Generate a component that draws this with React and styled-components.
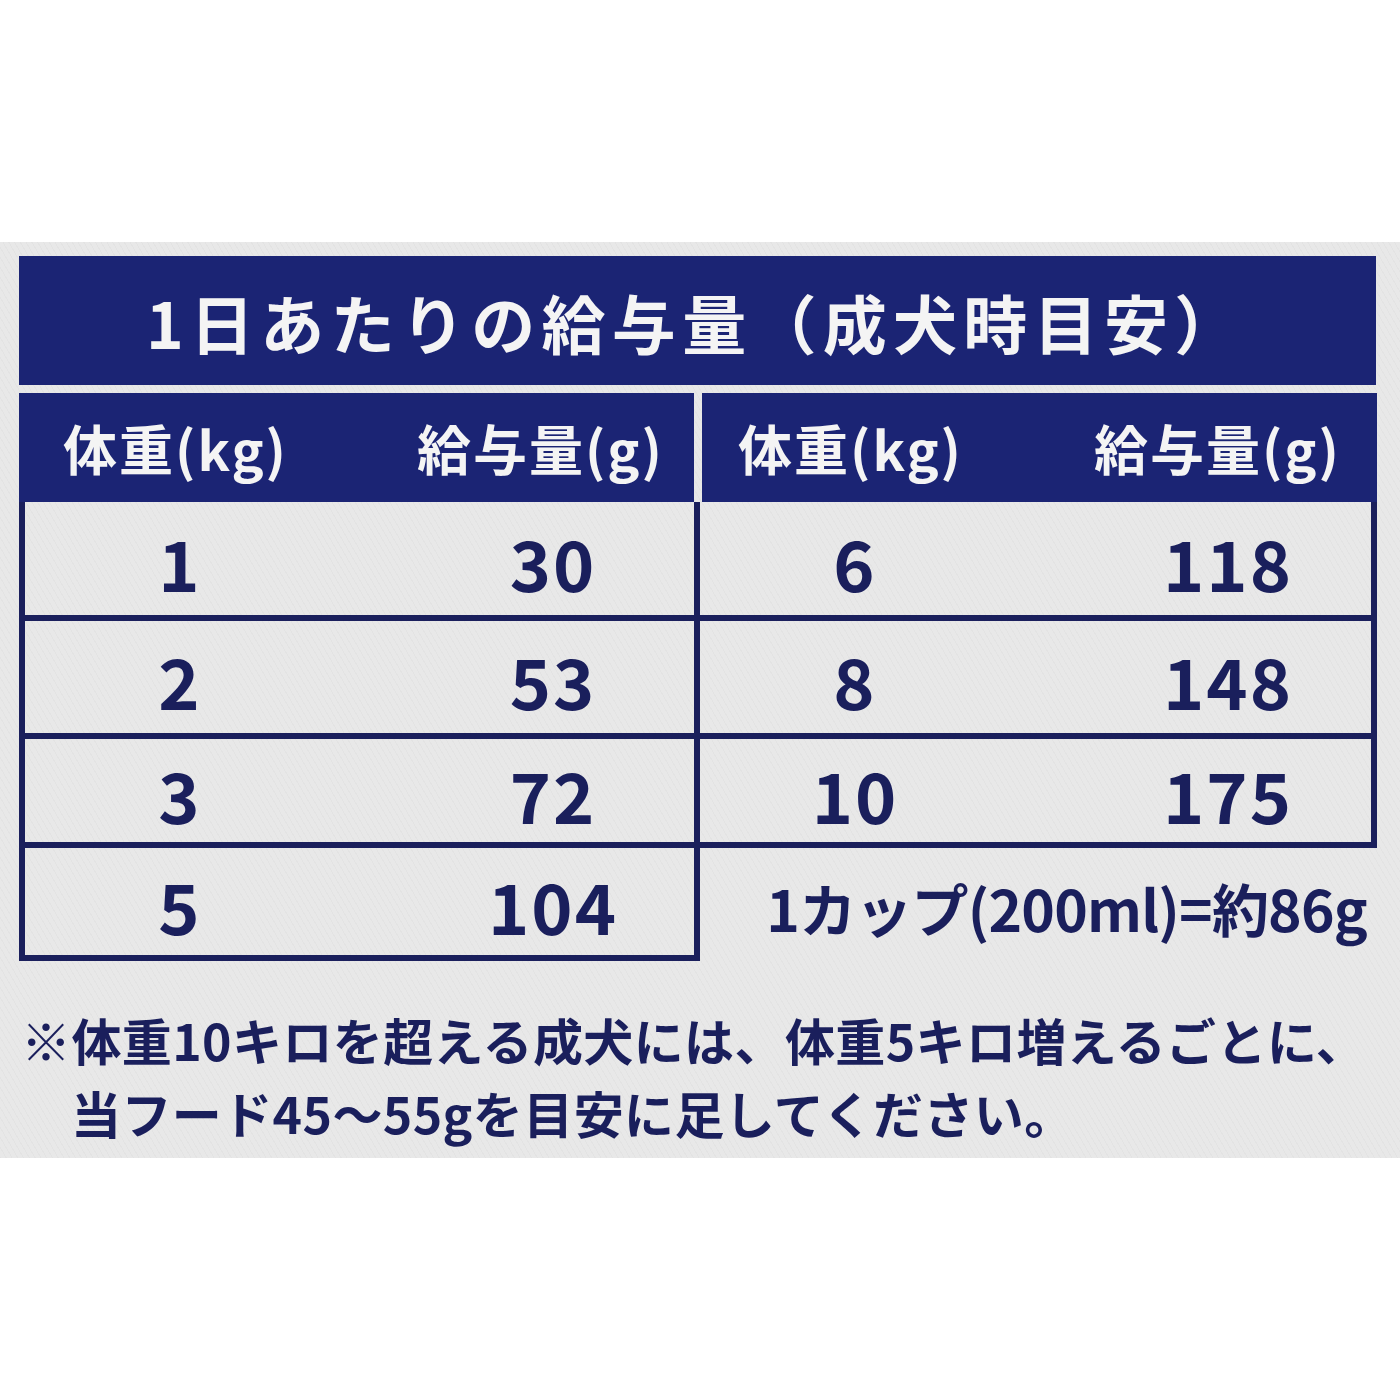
import React from 'react';
import styled, { createGlobalStyle } from 'styled-components';

const NAVY = '#1b2474';
const INK = '#1a1f5c';

const GlobalStyle = createGlobalStyle`
  html, body {
    margin: 0;
    padding: 0;
    background: #ffffff;
  }
  body {
    font-family: "Noto Sans CJK JP", "Noto Sans", sans-serif;
  }
`;

const Page = styled.div`
  width: 1400px;
  height: 1400px;
  padding-top: 242px;
  box-sizing: border-box;
  background: #ffffff;
`;

const Panel = styled.div`
  height: 916px;
  box-sizing: border-box;
  padding: 14px 23px 0 19px;
  background-color: #e8e8e8;
  background-image: repeating-linear-gradient(
    60deg,
    rgba(0, 0, 0, 0.025) 0 1px,
    transparent 1px 5px
  );
`;

const TitleBar = styled.div`
  width: 1357px;
  height: 129px;
  box-sizing: border-box;
  padding-left: 127px;
  display: flex;
  align-items: center;
  background: ${NAVY};
  color: #f4f4f4;
  font-size: 64px;
  font-weight: 700;
  letter-spacing: 6.3px;
  line-height: 1;
`;

const Columns = styled.div`
  margin-top: 8px;
  display: grid;
  grid-template-columns: 681px 677px;
`;

const Column = styled.div`
  display: flex;
  flex-direction: column;
`;

const HeaderBar = styled.div`
  height: 109px;
  box-sizing: border-box;
  margin: ${(p) => (p.$side === 'left' ? '0 6px 0 0' : '0 0 0 2px')};
  padding: ${(p) => (p.$side === 'left' ? '0 30px 0 44px' : '0 36px 0 36px')};
  display: flex;
  align-items: center;
  justify-content: space-between;
  background: ${NAVY};
  color: #f4f4f4;
  font-size: 54px;
  font-weight: 700;
  letter-spacing: 2px;
  line-height: 1;
`;

const CellStack = styled.div`
  display: flex;
  flex-direction: column;
  border-right: 6px solid ${INK};
  border-left: ${(p) => (p.$side === 'left' ? `6px solid ${INK}` : 'none')};
  border-bottom: ${(p) => (p.$side === 'left' ? `6px solid ${INK}` : 'none')};
`;

const Row = styled.div`
  height: ${(p) => p.$h}px;
  box-sizing: border-box;
  padding-left: 50px;
  padding-top: 6px;
  display: grid;
  grid-template-columns: 210px 200px;
  column-gap: 168px;
  align-items: center;
  border-top: ${(p) => (p.$first ? 'none' : `6px solid ${INK}`)};
  border-bottom: ${(p) => (p.$closed ? `6px solid ${INK}` : 'none')};
  color: ${INK};
  font-size: 70px;
  font-weight: 700;
  letter-spacing: 2px;
  line-height: 1;
`;

const Value = styled.span`
  text-align: center;
`;

const CupNote = styled.div`
  height: 113px;
  box-sizing: border-box;
  padding: 6px 10px 0 0;
  display: flex;
  align-items: center;
  justify-content: flex-end;
  color: ${INK};
  font-size: 57px;
  font-weight: 700;
  letter-spacing: -0.8px;
  line-height: 1;
`;

const Note = styled.div`
  margin-top: 42px;
  padding-left: 2px;
  color: ${INK};
  font-size: 50px;
  font-weight: 700;
  line-height: 73px;
  letter-spacing: 0.4px;
  white-space: nowrap;
`;

const NoteLine = styled.div`
  padding-left: ${(p) => (p.$indent ? '1em' : '0')};
`;

const left = [
  { w: '1', g: '30', h: 113 },
  { w: '2', g: '53', h: 118 },
  { w: '3', g: '72', h: 109 },
  { w: '5', g: '104', h: 113 },
];

const right = [
  { w: '6', g: '118', h: 113 },
  { w: '8', g: '148', h: 118 },
  { w: '10', g: '175', h: 115 },
];

const Header = ({ side }) => (
  <HeaderBar $side={side}>
    <span>体重(kg)</span>
    <span>給与量(g)</span>
  </HeaderBar>
);

export default function App() {
  return (
    <Page>
      <GlobalStyle />
      <Panel>
        <TitleBar>1日あたりの給与量（成犬時目安）</TitleBar>
        <Columns>
          <Column>
            <Header side="left" />
            <CellStack $side="left">
              {left.map((r, i) => (
                <Row key={r.w} $h={r.h} $first={i === 0}>
                  <Value>{r.w}</Value>
                  <Value>{r.g}</Value>
                </Row>
              ))}
            </CellStack>
          </Column>
          <Column>
            <Header side="right" />
            <CellStack $side="right">
              {right.map((r, i) => (
                <Row key={r.w} $h={r.h} $first={i === 0} $closed={i === right.length - 1}>
                  <Value>{r.w}</Value>
                  <Value>{r.g}</Value>
                </Row>
              ))}
            </CellStack>
            <CupNote>1カップ(200ml)=約86g</CupNote>
          </Column>
        </Columns>
        <Note>
          <NoteLine>※体重10キロを超える成犬には、体重5キロ増えるごとに、</NoteLine>
          <NoteLine $indent>当フード45〜55gを目安に足してください。</NoteLine>
        </Note>
      </Panel>
    </Page>
  );
}
